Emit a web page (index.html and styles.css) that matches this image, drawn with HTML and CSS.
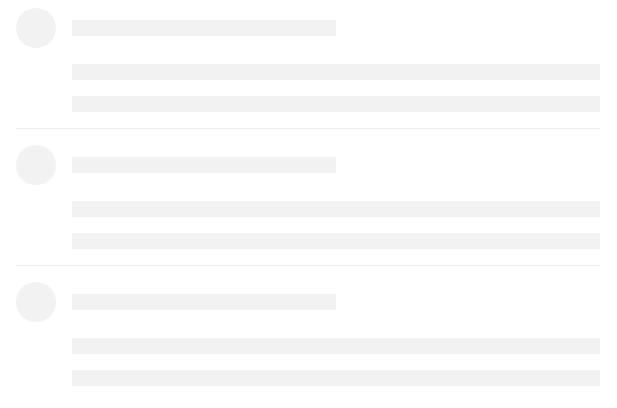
FILE: index.html
```html
<!DOCTYPE html>
<html>
<head>
<meta charset="utf-8">
<link rel="stylesheet" href="styles.css">
</head>
<body>
<div class="list">
  <div class="item">
    <div class="avatar"></div>
    <div class="body">
      <div class="bar title"></div>
      <div class="lines">
        <div class="bar"></div>
        <div class="bar"></div>
      </div>
    </div>
  </div>
  <div class="item">
    <div class="avatar"></div>
    <div class="body">
      <div class="bar title"></div>
      <div class="lines">
        <div class="bar"></div>
        <div class="bar"></div>
      </div>
    </div>
  </div>
  <div class="item">
    <div class="avatar"></div>
    <div class="body">
      <div class="bar title"></div>
      <div class="lines">
        <div class="bar"></div>
        <div class="bar"></div>
      </div>
    </div>
  </div>
</div>
</body>
</html>
```

FILE: styles.css
```css
html, body {
  margin: 0;
  padding: 0;
  background: #ffffff;
}
.list {
  padding: 8px 17px 0 16px;
}
.item {
  display: flex;
  gap: 16px;
  padding: 16px 0;
  border-bottom: 1px solid #efefef;
}
.item:first-child {
  padding-top: 0;
}
.item:last-child {
  border-bottom: none;
}
.avatar {
  width: 40px;
  height: 40px;
  border-radius: 50%;
  background: #f2f2f2;
  flex: none;
}
.body {
  flex: 1;
  padding-top: 12px;
}
.bar {
  height: 16px;
  background: #f2f2f2;
}
.title {
  width: 264px;
}
.lines {
  margin-top: 28px;
  display: flex;
  flex-direction: column;
  gap: 16px;
}
```
